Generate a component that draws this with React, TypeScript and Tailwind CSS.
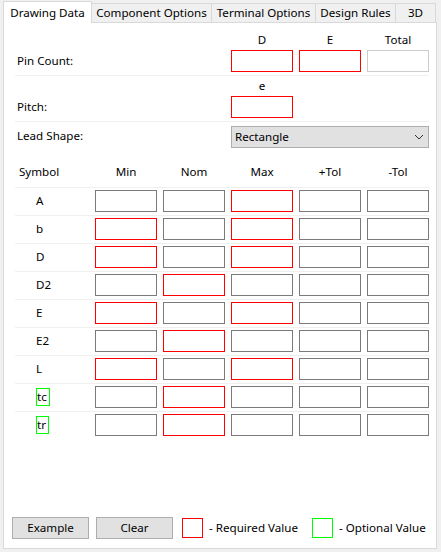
import React from "react";

const cols = "grid grid-cols-[74px_repeat(5,62px)] gap-x-[6px]";

type Kind = "r" | "g" | "d";

const Box = ({ kind = "g" }: { kind?: Kind }) => {
  const border =
    kind === "r"
      ? "border-[#ff0000]"
      : kind === "d"
      ? "border-[#cccccc]"
      : "border-[#7a7a7a]";
  return <div className={`h-[22px] w-[62px] border bg-white ${border}`} />;
};

const rows: { sym: string; kinds: Kind[]; optional?: boolean }[] = [
  { sym: "A", kinds: ["g", "g", "r", "g", "g"] },
  { sym: "b", kinds: ["r", "g", "r", "g", "g"] },
  { sym: "D", kinds: ["r", "g", "r", "g", "g"] },
  { sym: "D2", kinds: ["g", "r", "g", "g", "g"] },
  { sym: "E", kinds: ["r", "g", "r", "g", "g"] },
  { sym: "E2", kinds: ["g", "r", "g", "g", "g"] },
  { sym: "L", kinds: ["r", "g", "r", "g", "g"] },
  { sym: "tc", kinds: ["g", "r", "g", "g", "g"], optional: true },
  { sym: "tr", kinds: ["g", "r", "g", "g", "g"], optional: true },
];

const tabs = [
  { label: "Component Options", w: "w-[120px]" },
  { label: "Terminal Options", w: "w-[104px]" },
  { label: "Design Rules", w: "w-[80px]" },
  { label: "3D", w: "w-[40px]" },
];

const Line = () => <div className="h-px bg-[#efefef]" />;

export default function App() {
  return (
    <div className="w-[441px] h-[552px] bg-[#f0f0f0] pt-px pl-[3px] text-[11.6px] text-black font-['Noto_Sans','Liberation_Sans',sans-serif] overflow-hidden">
      {/* tab strip */}
      <div className="flex items-end h-[21px]">
        <div className="relative z-10 -mb-px h-[22px] w-[89px] bg-white border border-b-0 border-[#d9d9d9] flex items-center justify-center leading-none">
          Drawing Data
        </div>
        {tabs.map((t) => (
          <div
            key={t.label}
            className={`${t.w} h-[19px] border-t border-r border-[#d9d9d9] bg-[#f0f0f0] flex items-center justify-center leading-none`}
          >
            {t.label}
          </div>
        ))}
      </div>

      {/* panel */}
      <div className="w-[434px] h-[527px] border border-[#d9d9d9] bg-white flex flex-col">
        <div className="ml-[11px] w-[414px]">
          {/* pin count */}
          <div className={`${cols} pt-[9px]`}>
            <div />
            <div />
            <div />
            <div className="h-[16px] leading-[16px] text-center">D</div>
            <div className="h-[16px] leading-[16px] text-center">E</div>
            <div className="h-[16px] leading-[16px] text-center">Total</div>
            <div className="mt-[2px] pl-[2px] flex items-center">Pin Count:</div>
            <div />
            <div />
            <div className="mt-[2px]"><Box kind="r" /></div>
            <div className="mt-[2px]"><Box kind="r" /></div>
            <div className="mt-[2px]"><Box kind="d" /></div>
          </div>
          <div className="mt-[3px]"><Line /></div>

          {/* pitch */}
          <div className={`${cols} pt-[2px]`}>
            <div />
            <div />
            <div />
            <div className="h-[16px] leading-[16px] text-center">e</div>
            <div />
            <div />
            <div className="mt-[2px] pl-[2px] flex items-center">Pitch:</div>
            <div />
            <div />
            <div className="mt-[2px]"><Box kind="r" /></div>
          </div>
          <div className="mt-[3px]"><Line /></div>

          {/* lead shape */}
          <div className={`${cols} mt-[4px]`}>
            <div className="pl-[2px] flex items-center -mt-[2px] col-span-3">Lead Shape:</div>
            <div className="col-span-3 h-[22px] border border-[#adadad] bg-[#e1e1e1] flex items-center justify-between pl-[3px] pr-[4px]">
              <span>Rectangle</span>
              <svg width="10" height="6" viewBox="0 0 10 6" fill="none">
                <polyline points="1,1 5,5 9,1" stroke="#333" strokeWidth="1" />
              </svg>
            </div>
          </div>

          {/* table header */}
          <div className={`${cols} mt-[16px] h-[16px] leading-[16px]`}>
            <div className="pl-[4px]">Symbol</div>
            <div className="text-center">Min</div>
            <div className="text-center">Nom</div>
            <div className="text-center">Max</div>
            <div className="text-center">+Tol</div>
            <div className="text-center">-Tol</div>
          </div>

          {/* rows */}
          <div className="mt-[7px]">
            {rows.map((r) => (
              <div key={r.sym}>
                <Line />
                <div className={`${cols} pt-[2px] pb-[3px]`}>
                  <div className="pl-[21px] flex items-center">
                    {r.optional ? (
                      <span className="inline-block h-[18px] leading-[16px] border border-[#00ff00] pr-[2px]">
                        {r.sym}
                      </span>
                    ) : (
                      <span>{r.sym}</span>
                    )}
                  </div>
                  {r.kinds.map((k, i) => (
                    <Box key={i} kind={k} />
                  ))}
                </div>
              </div>
            ))}
          </div>
        </div>

        {/* bottom bar */}
        <div className="mt-auto pb-[9px] pl-[8px] flex items-center">
          <button className="w-[77px] h-[22px] bg-[#e1e1e1] border border-[#adadad] leading-none">
            Example
          </button>
          <button className="ml-[7px] w-[77px] h-[22px] bg-[#e1e1e1] border border-[#adadad] leading-none">
            Clear
          </button>
          <div className="ml-[9px] w-[21px] h-[20px] border border-[#ff0000]" />
          <span className="ml-[6px]">- Required Value</span>
          <div className="ml-[14px] w-[21px] h-[20px] border border-[#00ff00]" />
          <span className="ml-[6px]">- Optional Value</span>
        </div>
      </div>
    </div>
  );
}
